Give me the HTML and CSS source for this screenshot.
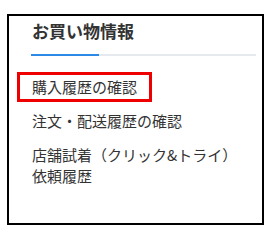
FILE: index.html
```html
<!DOCTYPE html>
<html lang="ja">
<head>
<meta charset="utf-8">
<title>お買い物情報</title>
<link rel="stylesheet" href="styles.css">
</head>
<body>
<div class="panel">
	<div class="heading">
		<h2>お買い物情報</h2>
		<div class="rule"><span></span></div>
	</div>
	<ul class="links">
		<li><a href="#" class="current">購入履歴の確認</a></li>
		<li><a href="#">注文・配送履歴の確認</a></li>
		<li><a href="#">店舗試着（クリック&amp;トライ）<br>依頼履歴</a></li>
	</ul>
</div>
</body>
</html>
```

FILE: styles.css
```css
body {
	margin: 0;
	padding: 0;
	background: #fff;
	font-family: "Noto Sans CJK JP", "Noto Sans", sans-serif;
	color: #333;
}

.panel {
	box-sizing: border-box;
	margin: 14px 0 0 7px;
	width: 257px;
	height: 211px;
	border: 2px solid #000;
}

.heading {
	margin: 0 6px 0 22px;
}

.heading h2 {
	margin: 0;
	padding: 3px 0 0 1px;
	font-size: 17px;
	font-weight: 700;
	line-height: 24px;
	color: #333;
}

.rule {
	margin-top: 11px;
	height: 2px;
	background: #e6eaee;
}

.rule span {
	display: block;
	width: 68px;
	height: 2px;
	background: #2a8ae6;
}

.links {
	list-style: none;
	margin: 16px 0 0 0;
	padding: 0 0 0 8px;
}

.links li {
	margin-bottom: 4px;
}

.links a {
	display: inline-block;
	padding: 1px 12px 2px;
	font-size: 15px;
	line-height: 21px;
	color: #333;
	text-decoration: none;
	border: 3px solid transparent;
}

.links a.current {
	border-color: #e00;
}
```
